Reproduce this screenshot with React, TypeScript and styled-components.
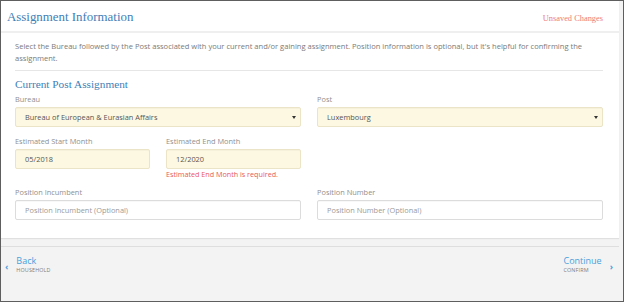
import React from "react"
import styled, { createGlobalStyle } from "styled-components"

const GlobalStyle = createGlobalStyle`
  html, body {
    margin: 0;
    padding: 0;
    background: #ffffff;
  }
  * {
    box-sizing: border-box;
  }
`

const SERIF = `"Liberation Serif", "DejaVu Serif", serif`
const SANS = `"Open Sans", "Noto Sans", sans-serif`
const BLUE = "#3f80b6"

const Frame = styled.div`
  width: 624px;
  height: 302px;
  border: 1px solid #5e5e5e;
  background: #f3f3f3;
  display: flex;
  flex-direction: column;
  overflow: hidden;
  font-family: ${SANS};
`

const Card = styled.section`
  width: 618px;
  background: #ffffff;
  box-shadow: 0 1px 1px rgba(0, 0, 0, 0.08);
  padding-bottom: 18px;
`

const Header = styled.header`
  height: 32px;
  padding: 2px 16px 0 6px;
  border-bottom: 2px solid #efefef;
  display: flex;
  align-items: center;
  justify-content: space-between;
`

const Title = styled.h1`
  margin: 0;
  font-family: ${SERIF};
  font-weight: 400;
  font-size: 12.9px;
  color: ${BLUE};
`

const Unsaved = styled.span`
  font-family: ${SERIF};
  font-size: 8.4px;
  color: #ec7b7b;
  margin-top: 3px;
`

const Body = styled.div`
  padding: 0 16px 0 14px;
`

const Intro = styled.p`
  margin: 7px 0 0;
  padding-bottom: 6px;
  border-bottom: 1px solid #e6e6e6;
  font-size: 7.55px;
  line-height: 12px;
  color: #7a7a7a;
`

const Subtitle = styled.h2`
  margin: 6px 0 3px;
  font-family: ${SERIF};
  font-weight: 400;
  font-size: 11.3px;
  line-height: 14px;
  color: ${BLUE};
`

const Grid = styled.div<{ $gap?: number }>`
  display: grid;
  grid-template-columns: 1fr 1fr;
  column-gap: 16px;
  margin-top: ${(p) => p.$gap ?? 0}px;
`

const Field = styled.div`
  display: flex;
  flex-direction: column;
  min-width: 0;
`

const Label = styled.label`
  font-size: 7.4px;
  line-height: 10px;
  color: #8f8f8f;
  margin-bottom: 3px;
`

const Control = styled.div<{ $filled?: boolean }>`
  position: relative;
  height: 20px;
  display: flex;
  align-items: center;
  padding-left: 9px;
  border-radius: 2px;
  border: 1px solid ${(p) => (p.$filled ? "#ece4c6" : "#dcdcdc")};
  background: ${(p) => (p.$filled ? "#fdf8e2" : "#ffffff")};
  box-shadow: inset 0 1px 1px rgba(0, 0, 0, 0.03);
  font-size: 7.4px;
  color: ${(p) => (p.$filled ? "#555555" : "#9a9a9a")};
`

const Caret = styled.span`
  position: absolute;
  right: 4px;
  top: 8px;
  width: 0;
  height: 0;
  border-left: 2px solid transparent;
  border-right: 2px solid transparent;
  border-top: 3px solid #333;
`

const Error = styled.div`
  margin-top: 1px;
  font-size: 7.2px;
  line-height: 8px;
  color: #e8595a;
`

const Footer = styled.footer`
  margin-top: 8px;
  width: 618px;
  border-top: 1px solid #dedede;
  display: flex;
  justify-content: space-between;
  padding: 9px 0 0;
`

const Nav = styled.a<{ $right?: boolean }>`
  display: flex;
  align-items: center;
  gap: 8px;
  flex-direction: ${(p) => (p.$right ? "row-reverse" : "row")};
  padding: ${(p) => (p.$right ? "0 6px 0 0" : "0 0 0 4px")};
  text-decoration: none;
`

const Chevron = styled.span`
  color: #4a9fdc;
  font-size: 9px;
  font-weight: 700;
  line-height: 1;
  margin-top: 3px;
`

const NavText = styled.div`
  display: flex;
  flex-direction: column;
`

const NavMain = styled.span`
  font-size: 9px;
  line-height: 10px;
  color: #4a9fdc;
`

const NavSub = styled.span`
  font-size: 5.4px;
  line-height: 8px;
  font-weight: 400;
  letter-spacing: 0.15px;
  color: #7d7d7d;
`

export default function App() {
  return (
    <>
      <GlobalStyle />
      <Frame>
        <Card>
          <Header>
            <Title>Assignment Information</Title>
            <Unsaved>Unsaved Changes</Unsaved>
          </Header>
          <Body>
            <Intro>
              Select the Bureau followed by the Post associated with your current and/or gaining
              assignment. Position information is optional, but it's helpful for confirming the
              assignment.
            </Intro>
            <Subtitle>Current Post Assignment</Subtitle>
            <Grid>
              <Field>
                <Label>Bureau</Label>
                <Control $filled>
                  Bureau of European &amp; Eurasian Affairs
                  <Caret />
                </Control>
              </Field>
              <Field>
                <Label>Post</Label>
                <Control $filled>
                  Luxembourg
                  <Caret />
                </Control>
              </Field>
            </Grid>
            <Grid $gap={9}>
              <Grid>
                <Field>
                  <Label>Estimated Start Month</Label>
                  <Control $filled>05/2018</Control>
                </Field>
                <Field>
                  <Label>Estimated End Month</Label>
                  <Control $filled>12/2020</Control>
                  <Error>Estimated End Month is required.</Error>
                </Field>
              </Grid>
            </Grid>
            <Grid $gap={9}>
              <Field>
                <Label>Position Incumbent</Label>
                <Control>Position Incumbent (Optional)</Control>
              </Field>
              <Field>
                <Label>Position Number</Label>
                <Control>Position Number (Optional)</Control>
              </Field>
            </Grid>
          </Body>
        </Card>
        <Footer>
          <Nav href="#">
            <Chevron>‹</Chevron>
            <NavText>
              <NavMain>Back</NavMain>
              <NavSub>HOUSEHOLD</NavSub>
            </NavText>
          </Nav>
          <Nav href="#" $right>
            <Chevron>›</Chevron>
            <NavText>
              <NavMain>Continue</NavMain>
              <NavSub>CONFIRM</NavSub>
            </NavText>
          </Nav>
        </Footer>
      </Frame>
    </>
  )
}
